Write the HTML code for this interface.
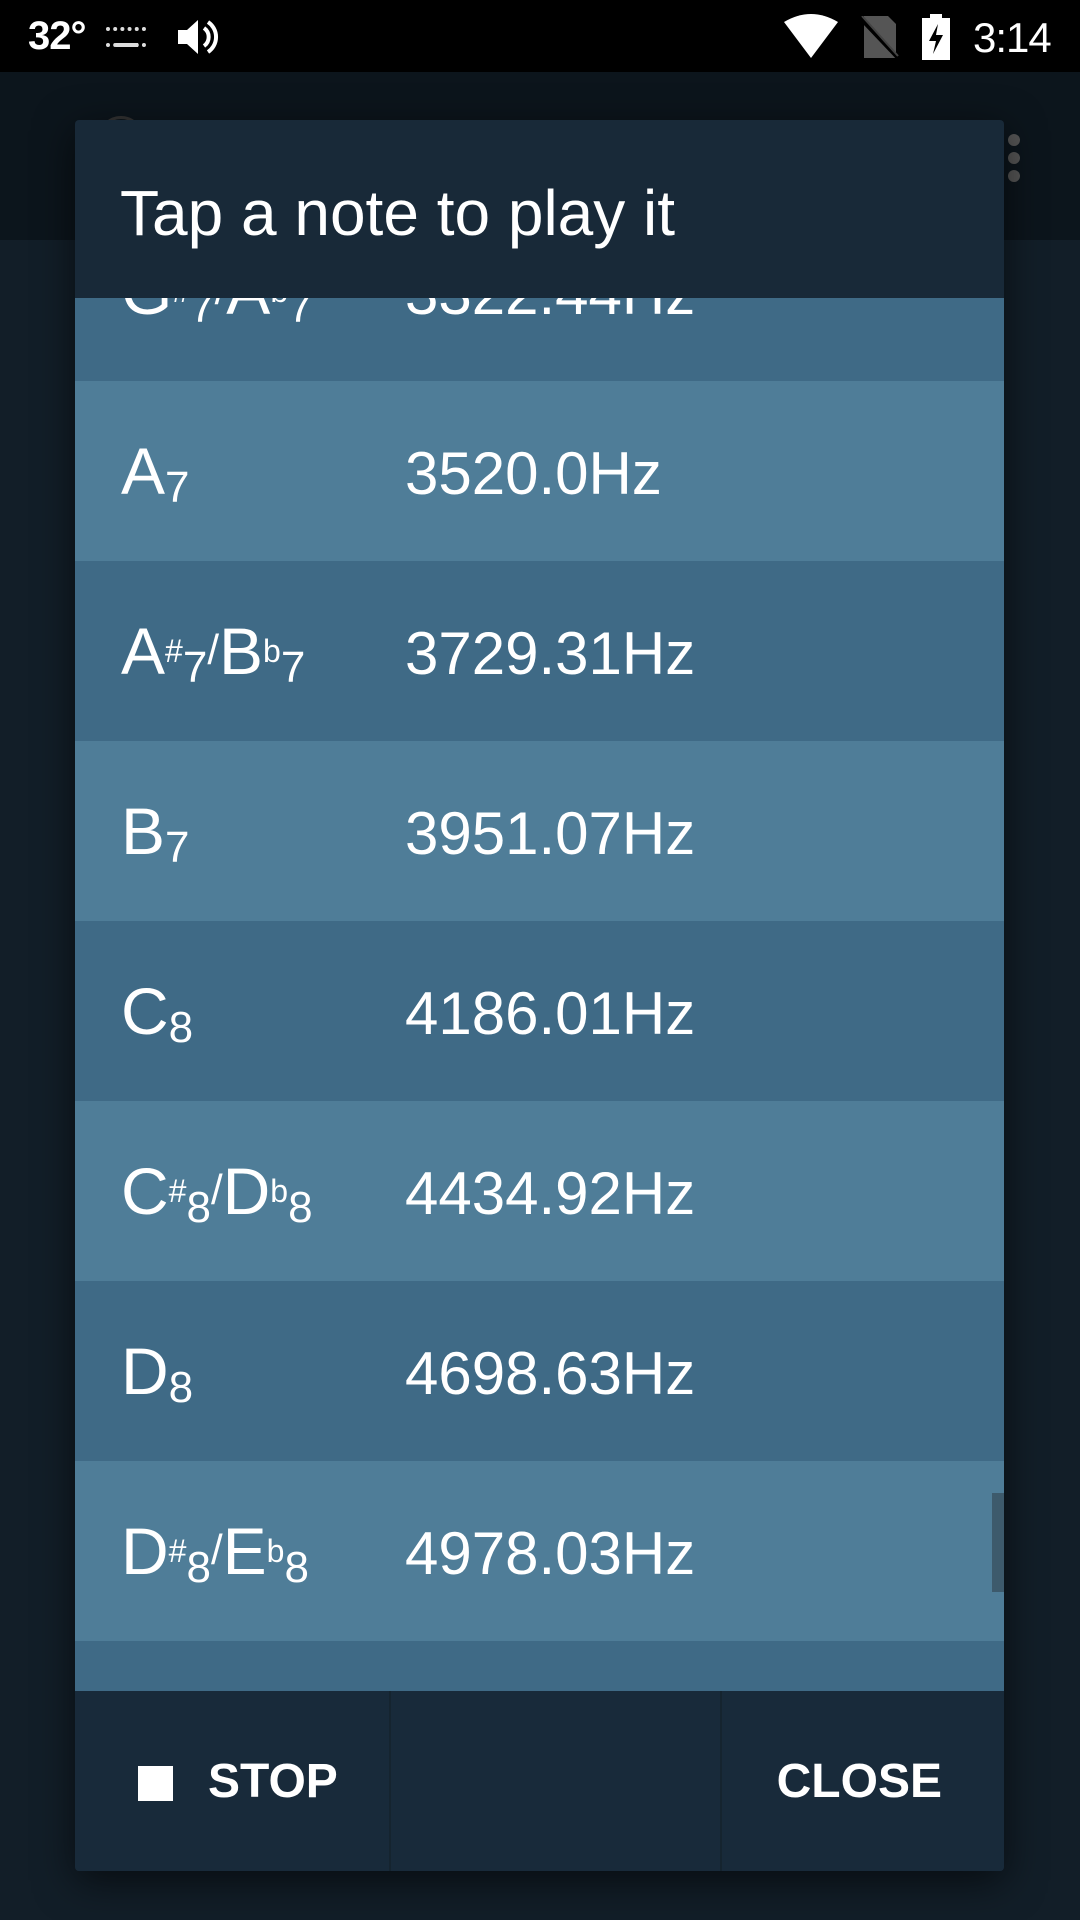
<!DOCTYPE html>
<html><head><meta charset="utf-8"><style>
*{margin:0;padding:0;box-sizing:border-box}
body{width:1080px;height:1920px;overflow:hidden;background:#121e28;font-family:"Liberation Sans",sans-serif;color:#fff;position:relative}
.sb{position:absolute;left:0;top:0;width:1080px;height:72px;background:#000}
.ab{position:absolute;left:0;top:72px;width:1080px;height:168px;background:#0c151c}
.dlg{position:absolute;left:75px;top:120px;width:929px;height:1751px;background:#182938;border-radius:4px;overflow:hidden;box-shadow:0 10px 40px rgba(0,0,0,.6)}
.title{position:absolute;left:45px;top:0;height:178px;font-size:64px;line-height:1;padding-top:61px}
.list{position:absolute;left:0;top:178px;width:929px;height:1393px;overflow:hidden}
.row{position:absolute;left:0;width:929px;height:180px}
.d{background:#3f6a86}.l{background:#4f7d98}
.n{position:absolute;left:46px;top:57px;font-size:66px;line-height:1;white-space:nowrap}
.n span{position:relative}
.acc{font-size:32px;top:-12px}
.sub{font-size:44px;top:8px}
.sl{font-size:42px;top:-10px}
.f{position:absolute;left:330px;top:63px;font-size:60px;line-height:1}
.btns{position:absolute;left:0;top:1571px;width:929px;height:180px;background:#182a3a}
.div{position:absolute;top:0;width:2px;height:180px;background:#15242f}
</style></head><body>
<div class="sb">
 <div style="position:absolute;left:28px;top:14px;font-size:40px;font-weight:bold;letter-spacing:-1px">32°</div>
 <div style="position:absolute;left:106px;top:27px;width:40px;height:20px;border-top:4px dotted #ddd;border-bottom:4px dotted #ddd"></div>
 <div style="position:absolute;left:116px;top:43px;width:22px;height:4px;background:#ddd"></div>
 <svg style="position:absolute;left:176px;top:16px" width="44" height="42" viewBox="0 0 44 42"><path d="M2 14h9l11-10v34L11 28H2z" fill="#fff"/><path d="M28 12a11 11 0 0 1 0 18M32 6a18 18 0 0 1 0 30" stroke="#fff" stroke-width="4" fill="none"/></svg>
 <svg style="position:absolute;left:784px;top:14px" width="54" height="44" viewBox="0 0 54 44"><path d="M0 8Q27-8 54 8L27 44z" fill="#fff"/></svg>
 <svg style="position:absolute;left:860px;top:16px" width="40" height="42" viewBox="0 0 40 42"><path d="M4 0h24l8 8v34H4z" fill="#555"/><path d="M0 2L38 42" stroke="#000" stroke-width="4"/><path d="M2 0L38 40" stroke="#444" stroke-width="2"/></svg>
 <svg style="position:absolute;left:922px;top:14px" width="28" height="46" viewBox="0 0 28 46"><rect x="8" y="0" width="12" height="5" fill="#fff"/><rect x="0" y="4" width="28" height="42" fill="#fff"/><path d="M16 10L7 27h7l-3 13 10-19h-7z" fill="#000"/></svg>
 <div style="position:absolute;left:973px;top:14px;font-size:42px;letter-spacing:-1px">3:14</div>
</div>
<div class="ab">
 <div style="position:absolute;left:98px;top:44px;width:46px;height:46px;border-radius:50%;border:3px solid #333"></div>
 <div style="position:absolute;left:1008px;top:62px;width:12px;height:12px;border-radius:50%;background:#555;box-shadow:0 18px 0 #555,0 36px 0 #555"></div>
</div>
<div class="dlg">
 <div class="title">Tap a note to play it</div>
 <div class="list">
  <div class="row d" style="top:-97px"><div class="n">G<span class="acc">#</span><span class="sub">7</span><span class="sl">/</span>A<span class="acc">b</span><span class="sub">7</span></div><div class="f">3322.44Hz</div></div>
  <div class="row l" style="top:83px"><div class="n">A<span class="sub">7</span></div><div class="f">3520.0Hz</div></div>
  <div class="row d" style="top:263px"><div class="n">A<span class="acc">#</span><span class="sub">7</span><span class="sl">/</span>B<span class="acc">b</span><span class="sub">7</span></div><div class="f">3729.31Hz</div></div>
  <div class="row l" style="top:443px"><div class="n">B<span class="sub">7</span></div><div class="f">3951.07Hz</div></div>
  <div class="row d" style="top:623px"><div class="n">C<span class="sub">8</span></div><div class="f">4186.01Hz</div></div>
  <div class="row l" style="top:803px"><div class="n">C<span class="acc">#</span><span class="sub">8</span><span class="sl">/</span>D<span class="acc">b</span><span class="sub">8</span></div><div class="f">4434.92Hz</div></div>
  <div class="row d" style="top:983px"><div class="n">D<span class="sub">8</span></div><div class="f">4698.63Hz</div></div>
  <div class="row l" style="top:1163px"><div class="n">D<span class="acc">#</span><span class="sub">8</span><span class="sl">/</span>E<span class="acc">b</span><span class="sub">8</span></div><div class="f">4978.03Hz</div></div>
  <div class="row d" style="top:1343px"></div>
  <div style="position:absolute;left:917px;top:1195px;width:12px;height:99px;background:#3d5a6c"></div>
 </div>
 <div class="btns">
  <div class="div" style="left:314px"></div>
  <div class="div" style="left:645px"></div>
  <div style="position:absolute;left:63px;top:75px;width:35px;height:35px;background:#fff"></div>
  <div style="position:absolute;left:133px;top:67px;font-size:48px;font-weight:bold;line-height:1">STOP</div>
  <div style="position:absolute;right:62px;top:67px;font-size:48px;font-weight:bold;line-height:1">CLOSE</div>
 </div>
</div>
</body></html>
